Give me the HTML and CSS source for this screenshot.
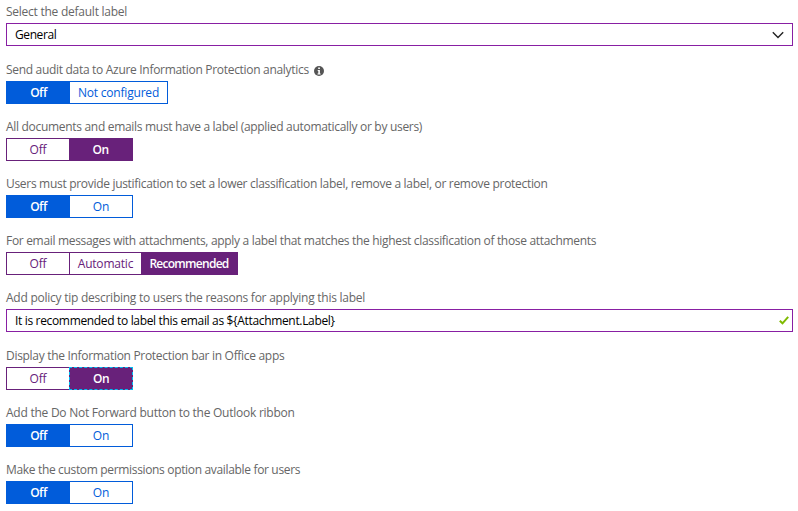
FILE: index.html
```
<!DOCTYPE html>
<html lang="en">
<head>
<meta charset="utf-8">
<title>Policy settings</title>
<link rel="stylesheet" href="styles.css">
</head>
<body>
<main class="form">
  <section class="field field-box">
    <div class="label loose"><span>Select the default label</span></div>
    <div class="box"><span>General</span>
      <svg class="chevron" width="12" height="8" viewBox="0 0 12 8"><path d="M.8 1.200 6 6.400l5.200-5.200" fill="none" stroke="#222" stroke-width="1.400"/></svg>
    </div>
  </section>
  <section class="field">
    <div class="label"><span>Send audit data to Azure Information Protection analytics</span>
      <svg class="info" width="10" height="10" viewBox="0 0 10 10"><circle cx="5" cy="5" r="5" fill="#555"/><path d="M4.200 1.500h1.700v1.500H4.200zM3.700 4h2.200v3.500h.7v1H3.500v-1h.8V5h-.6z" fill="#fff"/></svg>
    </div>
    <div class="toggle blue"><span class="opt on first">Off</span><span class="opt wide">Not configured</span></div>
  </section>
  <section class="field">
    <div class="label"><span>All documents and emails must have a label (applied automatically or by users)</span></div>
    <div class="toggle purple"><span class="opt first">Off</span><span class="opt on">On</span></div>
  </section>
  <section class="field">
    <div class="label"><span>Users must provide justification to set a lower classification label, remove a label, or remove protection</span></div>
    <div class="toggle blue"><span class="opt on first">Off</span><span class="opt">On</span></div>
  </section>
  <section class="field">
    <div class="label snug"><span>For email messages with attachments, apply a label that matches the highest classification of those attachments</span></div>
    <div class="toggle purple"><span class="opt first">Off</span><span class="opt auto">Automatic</span><span class="opt on recommended">Recommended</span></div>
  </section>
  <section class="field field-box">
    <div class="label loose"><span>Add policy tip describing to users the reasons for applying this label</span></div>
    <div class="box tip"><span>It is recommended to label this email as ${Attachment.Label}</span>
      <svg class="check" width="10" height="9" viewBox="0 0 10 9"><path d="M.8 4.700 3.500 7.300 9.200.9" fill="none" stroke="#7fba00" stroke-width="2"/></svg>
    </div>
  </section>
  <section class="field">
    <div class="label"><span>Display the Information Protection bar in Office apps</span></div>
    <div class="toggle purple"><span class="opt first">Off</span><span class="opt on focused">On</span></div>
  </section>
  <section class="field">
    <div class="label loose"><span>Add the Do Not Forward button to the Outlook ribbon</span></div>
    <div class="toggle blue"><span class="opt on first">Off</span><span class="opt">On</span></div>
  </section>
  <section class="field">
    <div class="label tight"><span>Make the custom permissions option available for users</span></div>
    <div class="toggle blue"><span class="opt on first">Off</span><span class="opt">On</span></div>
  </section>
</main>
</body>
</html>
```
FILE: styles.css
```
* { box-sizing: border-box; }
body {
  margin: 0;
  background: #fff;
  font: 12px/16px "Segoe UI", "Open Sans", sans-serif;
  letter-spacing: -0.2px;
  color: #666;
}
.form { padding: 4px 5px 0 6px; }
.field { margin-bottom: 15px; }
.field-box { margin-bottom: 16px; }
.label {
  display: flex;
  align-items: center;
  height: 16px;
  margin-bottom: 3px;
  letter-spacing: -0.305px;
  white-space: nowrap;
}
.label.loose { letter-spacing: -0.25px; }
.label.snug { letter-spacing: -0.317px; }
.label.tight { letter-spacing: -0.335px; }
.info { margin: 2px 0 0 5px; }
.box {
  display: flex;
  align-items: center;
  justify-content: space-between;
  height: 23px;
  padding: 0 3px 0 8px;
  border: 1px solid #881fa3;
  color: #000;
  letter-spacing: -0.4px;
}
.box.tip { letter-spacing: -0.335px; }
.chevron { margin-right: 5px; }
.toggle {
  display: inline-flex;
  height: 23px;
  vertical-align: top;
  border: 1px solid var(--accent);
  color: var(--accent);
}
.blue { --accent: #015cda; }
.purple { --accent: #68217a; }
.opt {
  display: flex;
  align-items: center;
  justify-content: center;
  width: 63px;
  height: 21px;
}
.blue .opt:not(.first) { width: 62px; }
.purple .opt.first { width: 62px; }
.blue .opt.wide:not(.first) { width: 97px; }
.purple .auto {
  width: 72px;
  border-left: 1px solid var(--accent);
}
.opt.on {
  background: var(--accent);
  color: #fff;
  font-weight: 600;
  letter-spacing: -0.5px;
}
.purple .recommended {
  width: 96px;
  letter-spacing: -0.72px;
}
.opt.focused {
  width: 64px;
  height: 23px;
  margin: -1px -1px -1px 0;
  border: 1px dashed #00bcf2;
}
```
